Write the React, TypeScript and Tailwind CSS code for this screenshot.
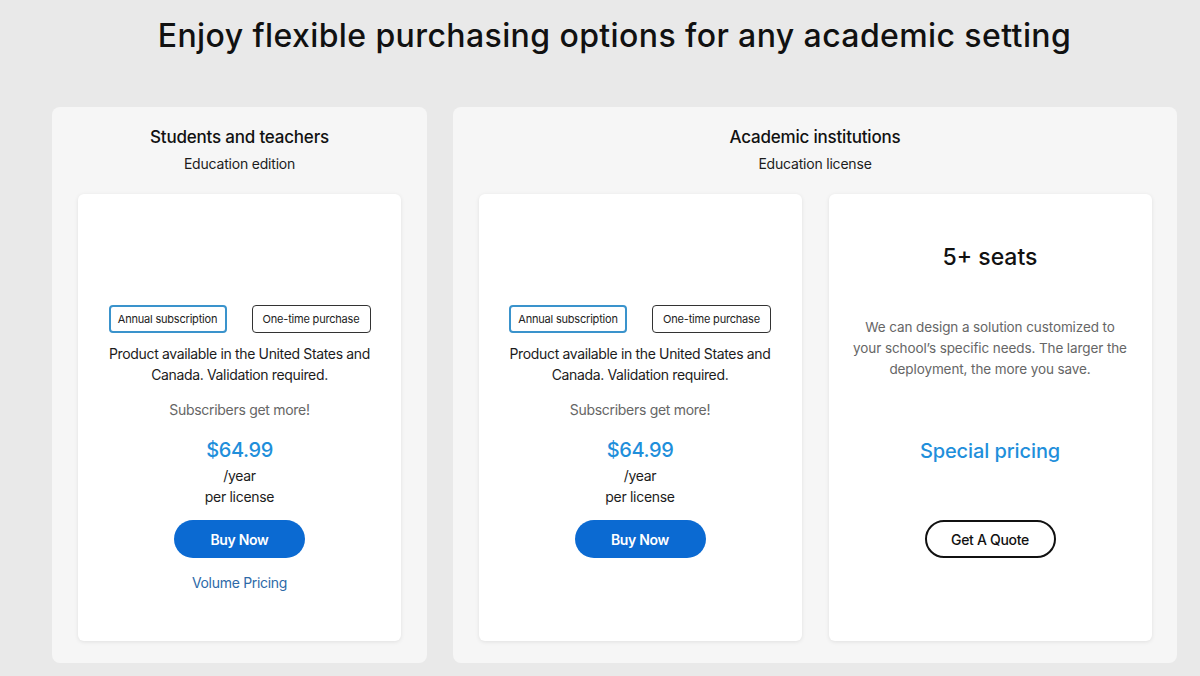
const font = { fontFamily: 'Inter, "Noto Sans", sans-serif' };

function Toggles() {
  return (
    <div className="flex justify-center gap-[25px]">
      <div className="flex h-[28px] w-[118px] items-center justify-center rounded-[4px] border-2 border-[#3a93cc] text-[11px] tracking-[-0.2px] text-[#222]">
        Annual subscription
      </div>
      <div className="flex h-[28px] w-[119px] items-center justify-center rounded-[4px] border border-[#333] text-[11px] tracking-[-0.2px] text-[#222]">
        One-time purchase
      </div>
    </div>
  );
}

function ProductCard({ volume = false }: { volume?: boolean }) {
  return (
    <div className="flex h-[447px] w-[323px] flex-col items-center rounded-[6px] bg-white pt-[111px] text-center shadow-[0_1px_4px_rgba(0,0,0,0.09)]">
      <Toggles />
      <p className="mt-[10px] text-[14px] leading-[21px] tracking-[-0.35px] text-[#1c1c1c]">
        Product available in the United States and
        <br />
        Canada. Validation required.
      </p>
      <p className="mt-[14px] text-[14px] leading-[21px] tracking-[-0.3px] text-[#666]">Subscribers get more!</p>
      <p className="mt-[16px] text-[20px] font-medium leading-[28px] tracking-[-0.4px] text-[#1f8fdb]">$64.99</p>
      <p className="mt-[1px] text-[14px] leading-[21px] tracking-[-0.3px] text-[#1c1c1c]">/year</p>
      <p className="text-[14px] leading-[21px] tracking-[-0.3px] text-[#1c1c1c]">per license</p>
      <button className="mt-[13px] h-[38px] w-[131px] rounded-full bg-[#0b6ad2] text-[14px] font-semibold tracking-[-0.3px] text-white">
        Buy Now
      </button>
      {volume && (
        <a className="mt-[14px] text-[14px] leading-[21px] tracking-[-0.3px] text-[#2d6aa8]">Volume Pricing</a>
      )}
    </div>
  );
}

function QuoteCard() {
  return (
    <div className="flex h-[447px] w-[323px] flex-col items-center rounded-[6px] bg-white pt-[48px] text-center shadow-[0_1px_4px_rgba(0,0,0,0.09)]">
      <h3 className="text-[23px] font-medium leading-[30px] tracking-[0px] text-[#111]">5+ seats</h3>
      <p className="mt-[45px] text-[13.5px] leading-[21px] tracking-[-0.1px] text-[#666]">
        We can design a solution customized to
        <br />
        your school’s specific needs. The larger the
        <br />
        deployment, the more you save.
      </p>
      <p className="mt-[57px] text-[20px] font-medium leading-[28px] tracking-[-0.1px] text-[#1f8fdb]">Special pricing</p>
      <button className="mt-[55px] h-[38px] w-[131px] rounded-full border-2 border-[#111] bg-white text-[14px] font-medium tracking-[-0.3px] text-[#111]">
        Get A Quote
      </button>
    </div>
  );
}

function PanelHeader({ title, sub }: { title: string; sub: string }) {
  return (
    <div className="text-center">
      <h2 className="text-[17px] font-medium leading-[24px] tracking-[-0.2px] text-[#111]">{title}</h2>
      <p className="mt-[5px] text-[14px] leading-[20px] tracking-[-0.2px] text-[#1c1c1c]">{sub}</p>
    </div>
  );
}

export default function App() {
  return (
    <div className="min-h-[676px] w-full overflow-hidden bg-[#e9e9e9]" style={font}>
      <div className="ml-[52px] w-[1125px] pt-[16px]">
        <h1 className="text-center text-[32px] font-medium leading-[40px] tracking-[0.4px] text-[#111]">
          Enjoy flexible purchasing options for any academic setting
        </h1>
        <div className="mt-[51px] flex gap-[26px]">
          <section className="flex h-[556px] w-[375px] flex-col items-center rounded-[8px] bg-[#f6f6f6] pt-[18px]">
            <PanelHeader title="Students and teachers" sub="Education edition" />
            <div className="mt-[20px]">
              <ProductCard volume />
            </div>
          </section>
          <section className="flex h-[556px] w-[724px] flex-col items-center rounded-[8px] bg-[#f6f6f6] pt-[18px]">
            <PanelHeader title="Academic institutions" sub="Education license" />
            <div className="mt-[20px] flex gap-[27px]">
              <ProductCard />
              <QuoteCard />
            </div>
          </section>
        </div>
      </div>
    </div>
  );
}
